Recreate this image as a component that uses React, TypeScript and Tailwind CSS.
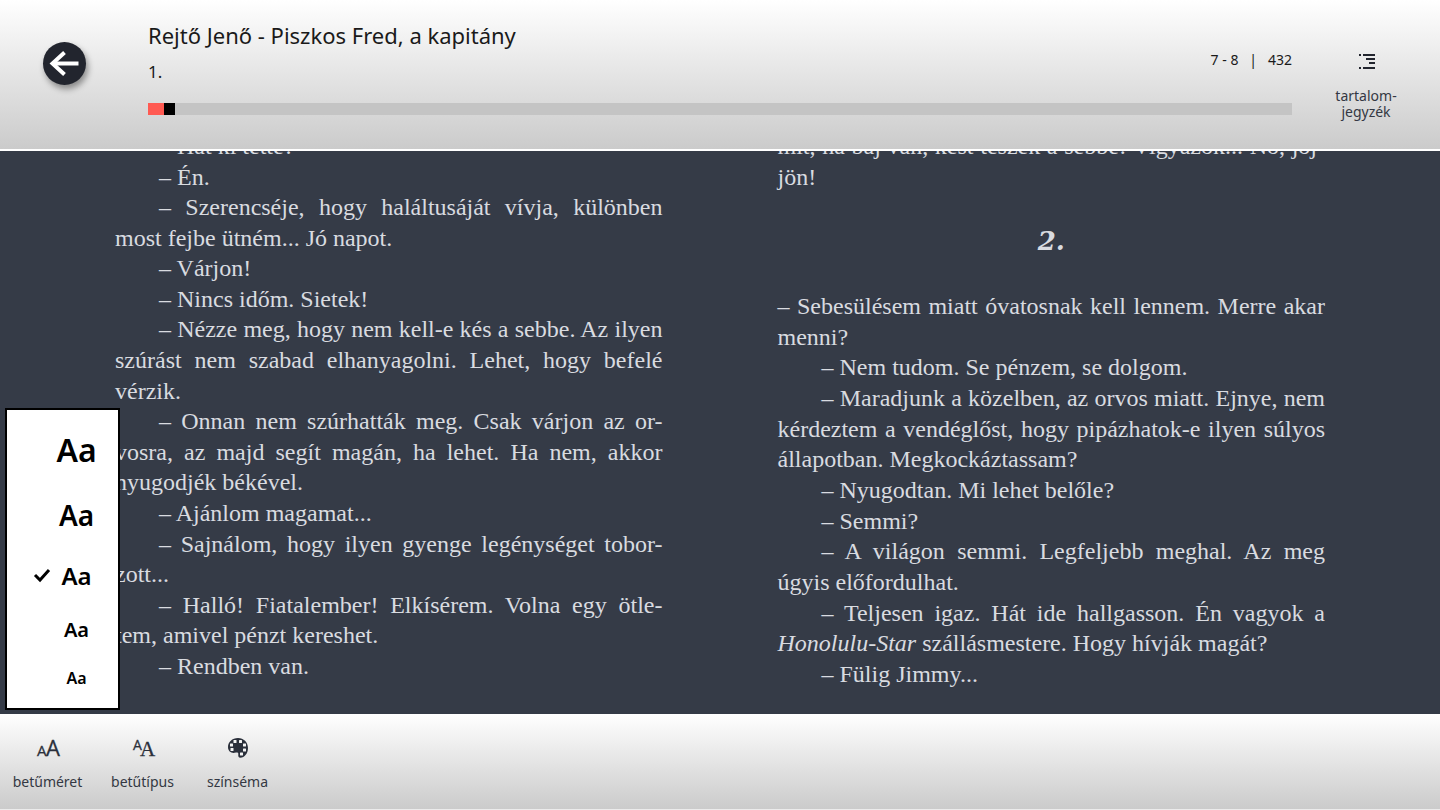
import React, { useState } from 'react';

interface Line {
  text: React.ReactNode;
  indent?: boolean;
  full?: boolean;
}

const TOTAL_PAGES = 432;

const leftPage: Line[] = [
  { text: '– Hát ki tette?', indent: true },
  { text: '– Én.', indent: true },
  { text: '– Szerencséje, hogy haláltusáját vívja, különben', indent: true, full: true },
  { text: 'most fejbe ütném... Jó napot.' },
  { text: '– Várjon!', indent: true },
  { text: '– Nincs időm. Sietek!', indent: true },
  { text: '– Nézze meg, hogy nem kell-e kés a sebbe. Az ilyen', indent: true, full: true },
  { text: 'szúrást nem szabad elhanyagolni. Lehet, hogy befelé', full: true },
  { text: 'vérzik.' },
  { text: '– Onnan nem szúrhatták meg. Csak várjon az or-', indent: true, full: true },
  { text: 'vosra, az majd segít magán, ha lehet. Ha nem, akkor', full: true },
  { text: 'nyugodjék békével.' },
  { text: '– Ajánlom magamat...', indent: true },
  { text: '– Sajnálom, hogy ilyen gyenge legénységet tobor-', indent: true, full: true },
  { text: 'zott...' },
  { text: '– Halló! Fiatalember! Elkísérem. Volna egy ötle-', indent: true, full: true },
  { text: 'tem, amivel pénzt kereshet.' },
  { text: '– Rendben van.', indent: true },
];

const rightPageTop: Line[] = [
  { text: 'mit, ha baj van, kést teszek a sebbe! Vigyázok... No, jöj-', full: true },
  { text: 'jön!' },
];

const rightPage: Line[] = [
  { text: '– Sebesülésem miatt óvatosnak kell lennem. Merre akar', full: true },
  { text: 'menni?' },
  { text: '– Nem tudom. Se pénzem, se dolgom.', indent: true },
  { text: '– Maradjunk a közelben, az orvos miatt. Ejnye, nem', indent: true, full: true },
  { text: 'kérdeztem a vendéglőst, hogy pipázhatok-e ilyen súlyos', full: true },
  { text: 'állapotban. Megkockáztassam?' },
  { text: '– Nyugodtan. Mi lehet belőle?', indent: true },
  { text: '– Semmi?', indent: true },
  { text: '– A világon semmi. Legfeljebb meghal. Az meg', indent: true, full: true },
  { text: 'úgyis előfordulhat.' },
  { text: '– Teljesen igaz. Hát ide hallgasson. Én vagyok a', indent: true, full: true },
  { text: <><em>Honolulu-Star</em> szállásmestere. Hogy hívják magát?</> },
  { text: '– Fülig Jimmy...', indent: true },
];

const fontSizes = [
  { id: 'xl', label: 'text-[32px] h-[68px]' },
  { id: 'lg', label: 'text-[28px] h-[62px]' },
  { id: 'md', label: 'text-[24px] h-[60px]' },
  { id: 'sm', label: 'text-[20px] h-12' },
  { id: 'xs', label: 'text-[16px] h-12' },
];

const Lines: React.FC<{ lines: Line[] }> = ({ lines }) => (
  <>
    {lines.map((line, i) => (
      <p
        key={i}
        className={`whitespace-nowrap ${line.indent ? 'pl-11' : ''} ${line.full ? '[text-align-last:justify]' : ''}`}
      >
        {line.text}
      </p>
    ))}
  </>
);

const SizeIcon = () => (
  <svg viewBox="0 0 32 24" className="w-8 h-6 overflow-visible" fill="#2b303b" stroke="#2b303b" strokeWidth="0.300" aria-hidden="true">
    <text x="5" y="20" fontSize="15" fontFamily="Open Sans, sans-serif">A</text>
    <text x="14" y="20" fontSize="22" fontFamily="Open Sans, sans-serif">A</text>
  </svg>
);

const TypeIcon = () => (
  <svg viewBox="0 0 32 24" className="w-8 h-6 overflow-visible" fill="#2b303b" stroke="#2b303b" strokeWidth="0.300" aria-hidden="true">
    <text x="6" y="14" fontSize="14" fontFamily="Open Sans, sans-serif">A</text>
    <text x="13" y="20" fontSize="21" fontFamily="Liberation Serif, serif">A</text>
  </svg>
);

const PaletteIcon = () => (
  <svg viewBox="0 0 24 24" className="w-6 h-6" aria-hidden="true">
    <path
      d="M12 2C6.200 2 2 6 2 11C2 15.500 5.500 17.500 9 16.800C11.500 16.300 12.600 16.800 12.300 18.500C12 20.500 12.800 21.800 14.300 21.800C18.600 21.500 22 17.500 22 12C22 6.200 17.600 2 12 2Z"
      fill="#2b303b"
    />
    <g fill="#f4f4f4">
      <rect x="7.500" y="4" width="3" height="3" rx="0.500" />
      <rect x="13" y="4" width="3" height="3" rx="0.500" />
      <rect x="17" y="7.500" width="3" height="3" rx="0.500" />
      <rect x="4" y="7.500" width="3" height="3" rx="0.500" />
      <rect x="4.500" y="12" width="3" height="3" rx="0.500" />
      <rect x="17" y="12.500" width="3" height="3" rx="0.500" />
      <rect x="14" y="16.500" width="3" height="3" rx="0.500" />
    </g>
  </svg>
);

const tools = [
  { label: 'betűméret', Icon: SizeIcon },
  { label: 'betűtípus', Icon: TypeIcon },
  { label: 'színséma', Icon: PaletteIcon },
];

const App: React.FC = () => {
  const [page, setPage] = useState(7);
  const [size, setSize] = useState('md');
  const [menuOpen, setMenuOpen] = useState(true);

  const progress = ((page - 1) / (TOTAL_PAGES - 1)) * 100;

  return (
    <div className="min-h-screen flex flex-col bg-[#353b47] font-['Noto_Sans','Open_Sans',sans-serif] text-[#1a1a1a]">
      <header className="relative z-10 flex items-start bg-linear-to-b from-white to-[#cbcbcb] border-b-2 border-white pb-[29px]">
        <button
          aria-label="Vissza"
          className="ml-[43px] mt-[42px] w-[43px] h-[43px] shrink-0 rounded-full bg-[#22252e] flex items-center justify-center shadow-[2px_4px_6px_rgba(0,0,0,0.4)]"
        >
          <svg viewBox="0 0 32 32" className="w-8 h-8" fill="none" stroke="#fff" strokeWidth="4" aria-hidden="true">
            <path d="M29.500 15.500H4" />
            <path d="M15.500 4.500L3.500 15.500L15.500 26.500" strokeLinejoin="miter" />
          </svg>
        </button>

        <div className="grow ml-[62px] pt-[19px]">
          <div className="flex justify-between">
            <div>
              <h1 className="text-[22px] leading-8">Rejtő Jenő - Piszkos Fred, a kapitány</h1>
              <p className="text-[17px] leading-[42px]">1.</p>
            </div>
            <p className="text-[14px] leading-10 pt-[21px] whitespace-pre">7 - 8   |   432</p>
          </div>
          <input
            type="range"
            aria-label="Oldal"
            min={1}
            max={TOTAL_PAGES}
            value={page}
            onChange={(e) => setPage(Number(e.target.value))}
            className="mt-2.5 block w-full h-3 appearance-none [&::-webkit-slider-thumb]:appearance-none [&::-webkit-slider-thumb]:w-[11px] [&::-webkit-slider-thumb]:h-3 [&::-webkit-slider-thumb]:bg-black"
            style={{ background: `linear-gradient(to right, #ff5a52 ${progress}%, #c4c4c4 ${progress}%)` }}
          />
        </div>

        <button className="w-[148px] shrink-0 mt-[51px] flex flex-col items-center text-[14px] leading-4 text-[#343843]">
          <svg viewBox="0 0 20 20" className="w-5 h-5 ml-0.5 mb-[17px]" fill="#22252e" aria-hidden="true">
            <rect x="2" y="3" width="2" height="2" />
            <rect x="6" y="3" width="12" height="2" />
            <rect x="9" y="7" width="9" height="2" />
            <rect x="12" y="11" width="6" height="2" />
            <rect x="2" y="16" width="2" height="2" />
            <rect x="6" y="16" width="12" height="2" />
          </svg>
          tartalom-<br />jegyzék
        </button>
      </header>

      <main className="relative grow flex">
        <div className="grow grid grid-cols-2 gap-[115px] px-[115px] -mt-5 font-['Liberation_Serif',serif] text-[24px] leading-[30px] text-[#d9dbe0]">
          <section className="flex flex-col justify-between pb-[33px]">
            <Lines lines={leftPage} />
          </section>
          <section className="flex flex-col justify-between pb-[25px]">
            <Lines lines={rightPageTop} />
            <h2 className="h-[98px] flex items-center justify-center text-[26px] font-['DejaVu_Serif',serif] font-bold italic">2.</h2>
            <Lines lines={rightPage} />
          </section>
        </div>

        {menuOpen && (
          <fieldset className="absolute left-[5px] bottom-1 w-[115px] bg-white border-2 border-black py-1.5 font-semibold text-black">
            {fontSizes.map((f) => (
              <label key={f.id} className={`relative flex items-center pl-7 justify-center cursor-pointer ${f.label}`}>
                <input
                  type="radio"
                  name="size"
                  aria-label={`Betűméret ${f.id}`}
                  checked={size === f.id}
                  onChange={() => setSize(f.id)}
                  className="sr-only"
                />
                {size === f.id && (
                  <svg viewBox="0 0 18 16" className="absolute left-[26px] w-[18px] h-4" fill="none" stroke="#000" strokeWidth="3" aria-hidden="true">
                    <path d="M2 7L7 12L16 2" />
                  </svg>
                )}
                Aa
              </label>
            ))}
          </fieldset>
        )}
      </main>

      <footer className="flex bg-linear-to-b from-white to-[#cbcbcb] border-b border-[#ececec] pt-[22px] pb-[17px]">
        {tools.map(({ label, Icon }, i) => (
          <button
            key={label}
            onClick={() => i === 0 && setMenuOpen(!menuOpen)}
            className="w-[95px] flex flex-col items-center gap-3 text-[14px] leading-5 text-[#343843]"
          >
            <Icon />
            {label}
          </button>
        ))}
      </footer>
    </div>
  );
};

export default App;
